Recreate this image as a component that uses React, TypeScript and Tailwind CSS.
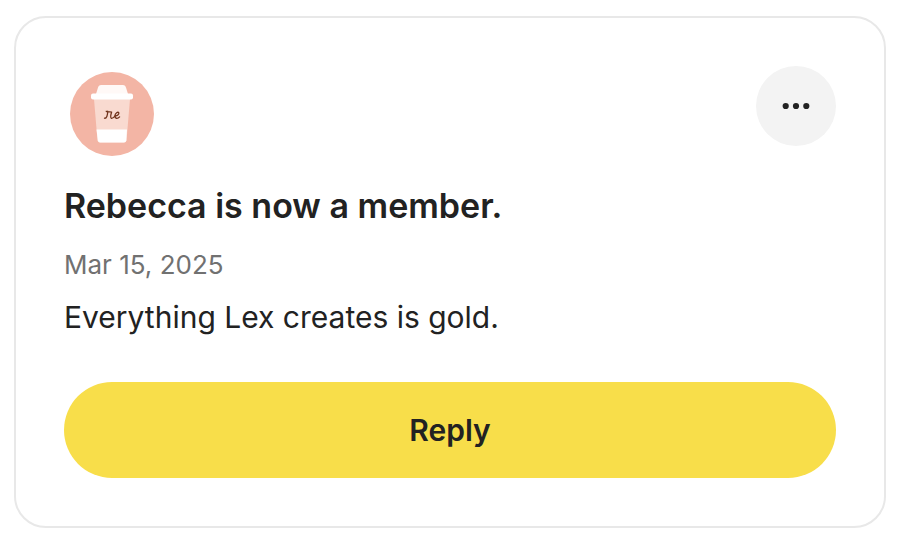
function Avatar() {
  return (
    <svg viewBox="0 0 84 84" className="size-[84px]" role="img" aria-label="Coffee cup">
      <circle cx="42" cy="42" r="42" fill="#f3b5a5" />
      <path d="M24 27H60L56.5 68.500Q56 70.500 54 70.500H30Q28 70.500 27.500 68.500Z" fill="#f9dad0" />
      <path d="M26.500 57.500H57L56.300 68.500Q56 70.500 54 70.500H30Q28.200 70.500 27.900 68.500Z" fill="#fff" />
      <path d="M26 22L28.300 14.800Q29 13 31 13H53Q55 13 55.700 14.800L58 22Z" fill="#fff9f7" />
      <rect x="21" y="21.500" width="42" height="6" rx="2" fill="#fff" />
      <g fill="none" stroke="#70331c" strokeWidth="1.300" strokeLinecap="round" strokeLinejoin="round">
        <path d="M34.500 46.200C36.500 46.600 37.700 43.500 37.700 39.200M36.200 39.300C36.800 40.600 39.500 39.300 41.600 40C40.800 42.500 40.300 45.500 41.300 46.300C42.500 46.800 44 45.200 45.200 43.900" />
        <path d="M45.200 43.900C47 44.200 49.300 42.200 48.800 40.800C48 39.300 45.200 41 44.900 43.800C44.700 46.800 47.500 47 49.600 44.900" />
      </g>
    </svg>
  );
}

export default function App() {
  return (
    <main className="bg-white px-4 pt-4 pb-[18px] pl-[14px] font-['Inter','Liberation_Sans',sans-serif] text-[#222]">
      <article className="rounded-[32px] border-2 border-[#e8e8e8] p-12">
        <header className="flex items-start justify-between">
          <div className="pt-1.5 pl-1.5">
            <Avatar />
          </div>
          <button
            type="button"
            aria-label="More options"
            className="flex size-20 items-center justify-center rounded-full bg-[#f3f3f3]"
          >
            <svg viewBox="0 0 28 8" className="h-2 w-7" fill="#222" aria-hidden="true">
              <circle cx="3.700" cy="4" r="3.100" />
              <circle cx="14" cy="4" r="3.100" />
              <circle cx="24.300" cy="4" r="3.100" />
            </svg>
          </button>
        </header>
        <h1 className="mt-7 text-[34px] leading-11 font-semibold">Rebecca is now a member.</h1>
        <p className="mt-4 text-[26px] leading-[42px] text-[#717171]">Mar 15, 2025</p>
        <p className="mt-[10px] text-[30px] leading-[42px]">Everything Lex creates is gold.</p>
        <button
          type="button"
          className="mt-11 h-24 w-full rounded-full bg-[#f8de4a] text-[30px] font-semibold"
        >
          Reply
        </button>
      </article>
    </main>
  );
}
